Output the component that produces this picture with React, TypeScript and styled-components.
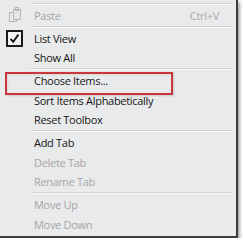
import styled, { createGlobalStyle } from 'styled-components'

const Global = createGlobalStyle`
  body {
    margin: 0;
    background: #ffffff;
    font-family: "Open Sans", "Noto Sans", sans-serif;
  }
`;

const Menu = styled.div`
  width: 236px;
  padding: 2px 0 1.5px;
  background: #e9eaeb;
  border-right: 2px solid #3c3c3c;
  border-bottom: 2px solid #3c3c3c;
  box-shadow: 2px 2px 3px rgba(0, 0, 0, 0.35);
  display: flex;
  flex-direction: column;
`;

const Row = styled.div<{ $disabled?: boolean }>`
  position: relative;
  height: 19.5px;
  display: flex;
  align-items: center;
  padding-right: 17px;
  font-size: 11px;
  letter-spacing: -0.3px;
  color: ${p => (p.$disabled ? '#a6a6a6' : '#161616')};
`;

const Gutter = styled.div`
  width: 29px;
  height: 100%;
  flex: none;
  display: flex;
  align-items: center;
  justify-content: center;
  margin-right: 5px;
`;

const Label = styled.span`
  flex: 1;
  white-space: nowrap;
`;

const Shortcut = styled.span`
  color: #a9a9a9;
`;

const Separator = styled.div`
  height: 3.5px;
  display: flex;
  align-items: center;
  padding: 0 4px 0 30px;

  &::after {
    content: '';
    flex: 1;
    border-top: 1px solid #d2d3d5;
    border-bottom: 1px solid #f7f7f7;
  }
`;

const Annotation = styled.div`
  position: absolute;
  left: 5px;
  top: 0.5px;
  width: 168px;
  height: 23px;
  box-sizing: border-box;
  border: 2px solid #c7373c;
  box-shadow: 1px 1px 2px rgba(0, 0, 0, 0.15), inset 1px 1px 2px rgba(0, 0, 0, 0.08);
  pointer-events: none;
`;

function PasteIcon() {
  return (
    <svg width="14" height="16" viewBox="0 0 14 16" fill="none" stroke="#b4b4b4" strokeWidth="1">
      <rect x="1.5" y="5.5" width="7" height="9" />
      <rect x="5.5" y="2.5" width="7" height="10" fill="#e4e5e6" />
      <rect x="7.5" y="0.5" width="3" height="3" />
    </svg>
  );
}

function CheckIcon() {
  return (
    <svg width="17" height="17" viewBox="0 0 17 17">
      <rect x="1" y="1" width="15" height="15" fill="#f2f2f2" stroke="#1a1a1a" strokeWidth="2" />
      <path d="M4.5 8.8 L7.2 11.8 L12.4 4.6" fill="none" stroke="#111" strokeWidth="1.8" />
    </svg>
  );
}

export default function App() {
  return (
    <>
      <Global />
      <Menu>
        <Separator />
        <Row $disabled>
          <Gutter><PasteIcon /></Gutter>
          <Label>Paste</Label>
          <Shortcut>Ctrl+V</Shortcut>
        </Row>
        <Separator />
        <Row>
          <Gutter><CheckIcon /></Gutter>
          <Label>List View</Label>
        </Row>
        <Row>
          <Gutter />
          <Label>Show All</Label>
        </Row>
        <Separator />
        <Row>
          <Gutter />
          <Label>Choose Items...</Label>
          <Annotation />
        </Row>
        <Row>
          <Gutter />
          <Label>Sort Items Alphabetically</Label>
        </Row>
        <Row>
          <Gutter />
          <Label>Reset Toolbox</Label>
        </Row>
        <Separator />
        <Row>
          <Gutter />
          <Label>Add Tab</Label>
        </Row>
        <Row $disabled>
          <Gutter />
          <Label>Delete Tab</Label>
        </Row>
        <Row $disabled>
          <Gutter />
          <Label>Rename Tab</Label>
        </Row>
        <Separator />
        <Row $disabled>
          <Gutter />
          <Label>Move Up</Label>
        </Row>
        <Row $disabled>
          <Gutter />
          <Label>Move Down</Label>
        </Row>
      </Menu>
    </>
  )
}
